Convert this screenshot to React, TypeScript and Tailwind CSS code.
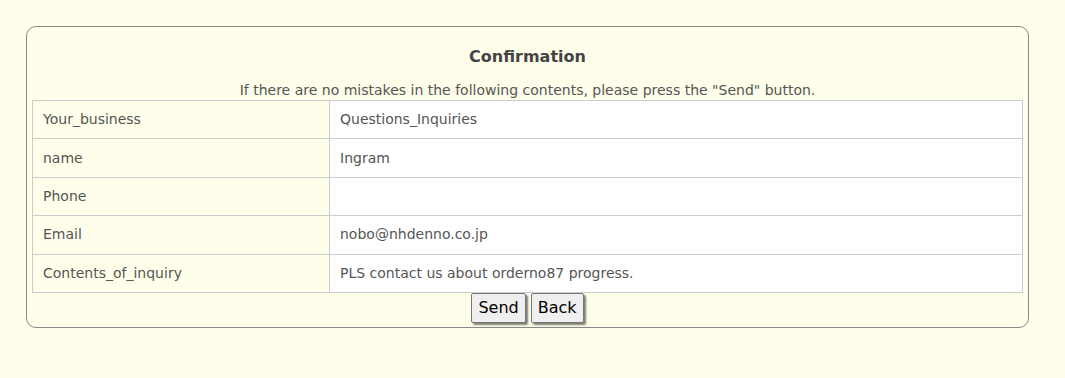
const rows: [string, string][] = [
  ['Your_business', 'Questions_Inquiries'],
  ['name', 'Ingram'],
  ['Phone', ''],
  ['Email', 'nobo@nhdenno.co.jp'],
  ['Contents_of_inquiry', 'PLS contact us about orderno87 progress.'],
];

export default function App() {
  return (
    <div
      className="min-h-[378px] bg-[#fffeea] pt-[26px] pl-[26px]"
      style={{ fontFamily: '"DejaVu Sans", Verdana, sans-serif' }}
    >
      <div className="w-[1003px] rounded-[10px] border border-[#888] px-[5px] pt-[18px] pb-[4px]">
        <h2 className="text-center text-[16px] font-bold leading-[24px] text-[#444]">Confirmation</h2>
        <p className="mt-[12px] text-center text-[14px] leading-[19px] text-[#555]">
          If there are no mistakes in the following contents, please press the "Send" button.
        </p>
        <table className="w-full border-collapse text-[14px] text-[#555]">
          <tbody>
            {rows.map(([label, value]) => (
              <tr key={label} className="h-[38.4px]">
                <td className="w-[297px] border border-[#ccc] px-[10px]">{label}</td>
                <td className="border border-[#ccc] bg-white px-[10px]">{value}</td>
              </tr>
            ))}
          </tbody>
        </table>
        <div className="flex justify-center gap-[5px]">
          <button className="h-[30px] rounded-[2px] border border-[#767676] bg-[#efefef] px-[6px] text-[16px] text-black shadow-[2px_2px_2px_rgba(0,0,0,0.5)]">
            Send
          </button>
          <button className="h-[30px] rounded-[2px] border border-[#767676] bg-[#efefef] px-[6px] text-[16px] text-black shadow-[2px_2px_2px_rgba(0,0,0,0.5)]">
            Back
          </button>
        </div>
      </div>
    </div>
  );
}
